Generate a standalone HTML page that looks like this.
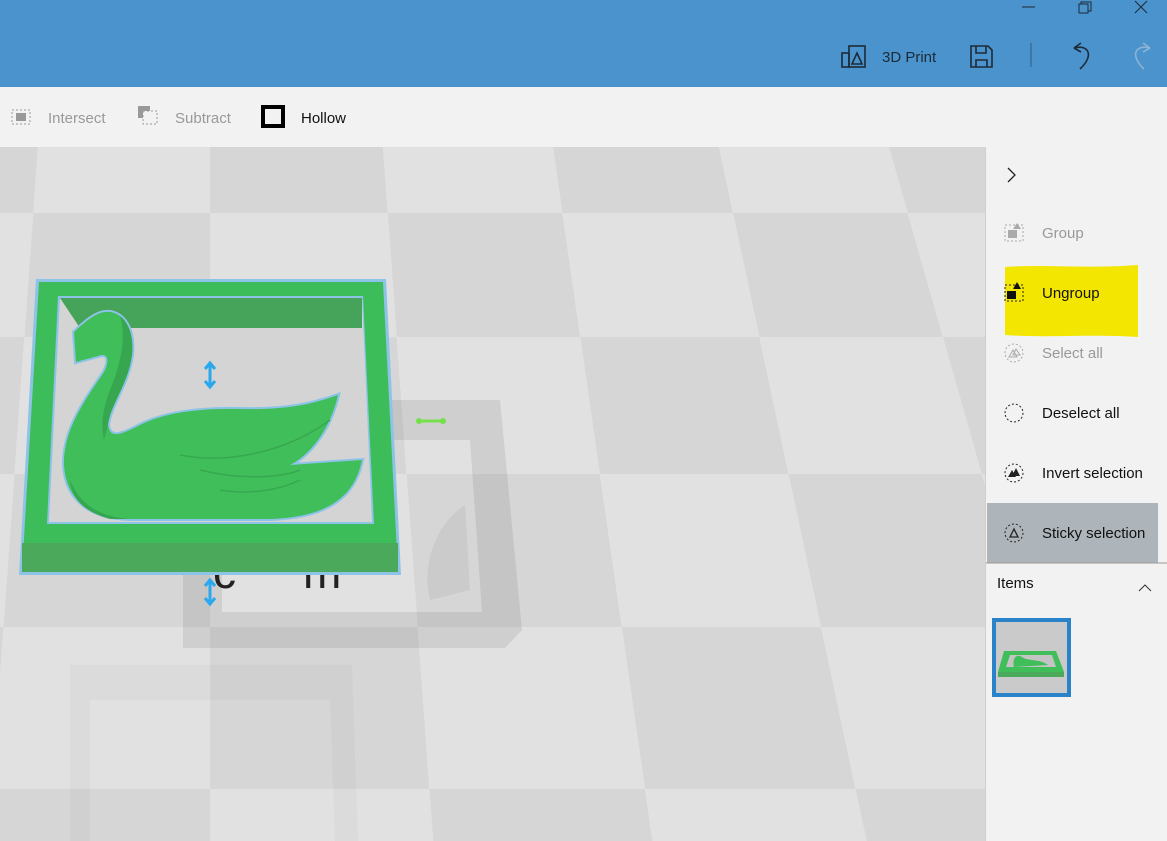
<!DOCTYPE html>
<html><head><meta charset="utf-8"><style>
body{margin:0;width:1167px;height:841px;overflow:hidden;font-family:"Liberation Sans",sans-serif;position:relative;background:#f2f2f2}
.top{position:absolute;left:0;top:0;width:1167px;height:87px;background:#4a93cc}
.tb{position:absolute;left:0;top:87px;width:1167px;height:60px;background:#f2f2f2}
.t{position:absolute;font-size:15px;white-space:nowrap}
.panel{position:absolute;left:985px;top:147px;width:182px;height:694px;background:#f2f2f2;border-left:1px solid #cfcfcf}
</style></head><body>
<div class="top">
<svg width="1167" height="87" style="position:absolute;left:0;top:0" fill="none" stroke="#1e2a36" stroke-width="1.6">
<line x1="1022" y1="7" x2="1035" y2="7" stroke-width="1"/>
<rect x="1079" y="4" width="9" height="9" stroke-width="1"/><path d="M1081,4 V2 H1091 V11 H1088" stroke-width="1"/>
<path d="M1135,1 L1147,13 M1147,1 L1135,13" stroke-width="1"/>
<rect x="842" y="53" width="7" height="14"/><rect x="849" y="46" width="16" height="21"/><path d="M852,64 L857,53 L862,64 Z"/>
<path d="M971,46 H988 L992,50 V67 H971 Z M976,46 V53 H986 V46 M976,67 V60 H987 V67"/>
<line x1="1031" y1="43" x2="1031" y2="67" stroke="#2d5b82" stroke-width="1"/>
<path d="M1074,48 L1081,43 M1074,48 L1081,52 M1074,48 C1088,44 1095,55 1080,69"/>
<path d="M1150,48 L1143,43 M1150,48 L1143,52 M1150,48 C1136,44 1129,55 1144,69" stroke="#8db4d4"/>
</svg>
<div class="t" style="left:882px;top:49px;color:#1e2a36">3D Print</div>
</div>
<div class="tb">
<svg width="400" height="60" style="position:absolute;left:0;top:0">
<rect x="12" y="23" width="18" height="14" fill="none" stroke="#999" stroke-dasharray="2,2"/><rect x="16" y="26" width="10" height="8" fill="#999"/>
<rect x="138" y="19" width="12" height="12" fill="#999"/><rect x="143" y="24" width="14" height="13" fill="#f2f2f2" stroke="#999" stroke-dasharray="2,2"/>
<rect x="263" y="20" width="20" height="19" fill="none" stroke="#000" stroke-width="4"/>
</svg>
<div class="t" style="left:48px;top:23px;color:#999">Intersect</div>
<div class="t" style="left:175px;top:23px;color:#999">Subtract</div>
<div class="t" style="left:301px;top:23px;color:#111">Hollow</div>
</div>
<svg width="985" height="694" style="position:absolute;left:0;top:147px">
<g id="bg"></g>
<g transform="translate(0,-147)">
<path d="M183,400 L500,400 L522,630 L505,648 L183,648 Z M222,440 L470,440 L482,612 L222,612 Z" fill="#000" opacity="0.08" fill-rule="evenodd"/>
<path d="M70,665 L352,665 L358,841 L70,841 Z M90,700 L330,700 L335,841 L90,841Z" fill="#000" opacity="0.025" fill-rule="evenodd"/>
<path d="M465,505 C440,520 420,560 430,600 L470,590 Z" fill="#000" opacity="0.05"/>
<text x="213" y="588" font-size="46" fill="#222" font-family="Liberation Sans">c</text>
<text x="303" y="588" font-size="46" fill="#222" font-family="Liberation Sans">m</text>
<path d="M36,279 L386,279 L401,575 L19,575 Z" fill="#8ec3e8"/>
<path d="M39,282 L383,282 L398,572 L22,572 Z" fill="#3dbd5a"/>
<rect x="22" y="543" width="376" height="29" fill="#4aa95a"/>
<path d="M58,296 L363,296 L374,524 L47,524 Z" fill="#8ec3e8"/>
<path d="M60,298 L362,298 L372,522 L49,522 Z" fill="#d4d4d4"/>
<path d="M60,298 L362,298 L362,328 L80,328 Z" fill="#46a35a"/>
<path id="sw" d="M74,332 L76,362 L98,356 C108,352 110,360 104,372 C85,400 63,430 64,465 C66,500 90,518 130,519 L270,519 C330,517 355,495 362,460 L290,465 C310,455 330,430 338,395 C310,405 285,410 240,409 C190,408 160,415 140,425 C122,434 110,440 108,425 C110,405 128,385 132,355 C135,325 120,310 105,312 C95,313 85,322 74,332 Z" fill="none" stroke="#8ec3e8" stroke-width="4"/>
<path d="M74,332 L76,362 L98,356 C108,352 110,360 104,372 C85,400 63,430 64,465 C66,500 90,518 130,519 L270,519 C330,517 355,495 362,460 L290,465 C310,455 330,430 338,395 C310,405 285,410 240,409 C190,408 160,415 140,425 C122,434 110,440 108,425 C110,405 128,385 132,355 C135,325 120,310 105,312 C95,313 85,322 74,332 Z" fill="#3fbe5a"/>
<path d="M108,425 C110,405 128,385 132,355 C134,335 128,322 120,316 C126,335 122,360 112,385 C104,405 100,420 104,440 Z" fill="#36a64f"/>
<path d="M70,480 C80,505 100,517 130,519 L110,519 C85,512 72,500 70,480Z" fill="#36a64f"/>
<path d="M200,470 C240,480 280,478 300,470 M180,455 C230,465 290,450 330,420 M220,490 C250,495 280,490 300,480" fill="none" stroke="#38a850" stroke-width="1.5"/>
<path d="M210,364 V386 M205,369 L210,363 L215,369 M205,381 L210,387 L215,381" stroke="#2aa8ee" stroke-width="3" fill="none"/>
<path d="M210,581 V603 M205,586 L210,580 L215,586 M205,598 L210,604 L215,598" stroke="#2aa8ee" stroke-width="3" fill="none"/>
<path d="M418,421 H444" stroke="#76e04a" stroke-width="3"/><circle cx="419" cy="421" r="3" fill="#76e04a"/><circle cx="443" cy="421" r="3" fill="#76e04a"/>
</g>
</svg>
<div class="panel">
<svg width="182" height="694" style="position:absolute;left:0;top:0">
<path d="M22,21 L29,28 L22,35" fill="none" stroke="#222" stroke-width="1.3"/>
<path d="M19,120 C60,117 100,122 152,118 L152,190 C100,187 60,191 19,188 Z" fill="#f3e600"/>
<rect x="1" y="356" width="171" height="60" fill="#adb5bb"/>
<line x1="0" y1="416" x2="182" y2="416" stroke="#999"/>
<rect x="19" y="78" width="18" height="16" fill="none" stroke="#aaa" stroke-dasharray="2,2"/><rect x="22" y="83" width="9" height="8" fill="#aaa"/><path d="M27,82 L31,76 L35,82Z" fill="#aaa"/>
<rect x="19" y="138" width="18" height="16" fill="none" stroke="#222" stroke-dasharray="2,2"/><rect x="21" y="144" width="9" height="8" fill="#111"/><path d="M27,142 L31,135 L35,142Z" fill="#111"/>
<circle cx="28" cy="206" r="9" fill="none" stroke="#aaa" stroke-dasharray="2,2"/><path d="M23,210 L27,203 L31,210Z M27,208 L30,202 L34,208Z" fill="none" stroke="#aaa"/>
<circle cx="28" cy="266" r="9" fill="none" stroke="#222" stroke-dasharray="2,2"/>
<circle cx="28" cy="326" r="9" fill="none" stroke="#222" stroke-dasharray="2,2"/><path d="M22,330 L26,323 L30,330Z M26,329 L30,321 L34,329Z" fill="#222"/>
<circle cx="28" cy="386" r="9" fill="none" stroke="#222" stroke-dasharray="2,2"/><path d="M24,390 L28,382 L32,390Z" fill="none" stroke="#222" stroke-width="1.3"/>
<path d="M153,444 L159,438 L165,444" fill="none" stroke="#333"/>
<rect x="8" y="473" width="75" height="75" fill="none" stroke="#2a82c8" stroke-width="4"/>
<rect x="10" y="475" width="71" height="71" fill="#cacaca"/>
<path d="M18,504 L70,504 L78,525 L12,525 Z" fill="#3fbe5a"/><rect x="12" y="525" width="66" height="5" fill="#4aa95a"/>
<path d="M24,508 L66,508 L70,520 L20,520Z" fill="#c4c4c4"/><path d="M28,520 C26,512 30,506 36,510 C40,514 55,512 62,518Z" fill="#3fbe5a"/>
</svg>
<div class="t" style="left:56px;top:78px;color:#999">Group</div>
<div class="t" style="left:56px;top:138px;color:#111">Ungroup</div>
<div class="t" style="left:56px;top:198px;color:#999">Select all</div>
<div class="t" style="left:56px;top:258px;color:#111">Deselect all</div>
<div class="t" style="left:56px;top:318px;color:#111">Invert selection</div>
<div class="t" style="left:56px;top:378px;color:#111">Sticky selection</div>
<div class="t" style="left:11px;top:428px;color:#111">Items</div>
</div>
<script>
var h='';
var ys=[147,213,337,474,627,789,841],xt=[-300,-134,38,210,383,553,719,889,1060,1230];
function X(x,y){return x+(x-210)*0.29*(y-147)/694;}
for(var r=0;r<6;r++)for(var c=0;c<9;c++){var y0=ys[r],y1=ys[r+1];
var col=((r+c)%2)?'#d6d6d6':'#e1e1e1';
h+='<polygon fill="'+col+'" points="'+X(xt[c],y0)+','+(y0-147)+' '+X(xt[c+1],y0)+','+(y0-147)+' '+X(xt[c+1],y1)+','+(y1-147)+' '+X(xt[c],y1)+','+(y1-147)+'"/>';}
document.getElementById('bg').innerHTML=h;
</script>
</body></html>
